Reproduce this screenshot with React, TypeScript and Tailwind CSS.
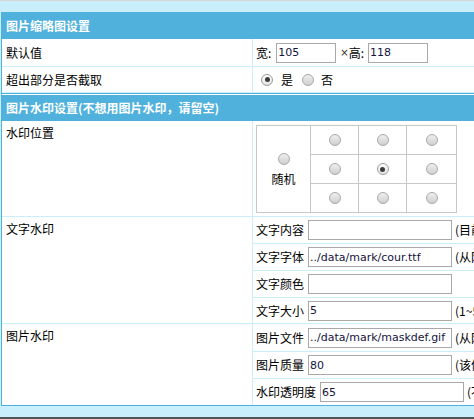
import React from "react"

const SEP = "border-[#c9eefc]"

function Radio({ checked }: { checked?: boolean }) {
  return (
    <span
      className={
        checked
          ? "inline-flex w-[12px] h-[12px] rounded-full border border-[#9c9c9c] bg-linear-to-b from-[#ffffff] to-[#e4e4e4] items-center justify-center shrink-0"
          : "inline-flex w-[12px] h-[12px] rounded-full border border-[#a8a8a8] bg-linear-to-b from-[#efefef] to-[#cfcfcf] shrink-0"
      }
    >
      {checked && <span className="w-[5px] h-[5px] rounded-full bg-[#3c3c3c]" />}
    </span>
  )
}

function TextBox({ value, width }: { value: string; width: string }) {
  return (
    <input
      readOnly
      value={value}
      className={`${width} h-[20px] border border-[#a9a9a9] bg-white px-[1px] text-[11px] text-[#141440] font-['DejaVu_Sans',sans-serif] outline-none shrink-0`}
    />
  )
}

function Field({
  label,
  value,
  suffix,
  h,
  last,
}: {
  label: string
  value: string
  suffix?: string
  h: string
  last?: boolean
}) {
  return (
    <div className={`${h} flex items-center pl-[3px] whitespace-nowrap ${last ? "" : `border-b ${SEP}`}`}>
      <span>{label}</span>
      <span className="ml-[4px]">
        <TextBox value={value} width="w-[144px]" />
      </span>
      {suffix && <span className="ml-[3px]">{suffix}</span>}
    </div>
  )
}

function Header({ children }: { children: React.ReactNode }) {
  return (
    <div className="h-[26px] bg-[#4fb1dc] text-white font-bold flex items-center pl-[4px] whitespace-nowrap">
      {children}
    </div>
  )
}

export default function App() {
  const positions = [
    [false, false, false],
    [false, true, false],
    [false, false, false],
  ]

  return (
    <div className="w-[474px] h-[419px] overflow-hidden bg-[#c9eefc] flex flex-col text-[12px] text-black font-['Noto_Sans_CJK_SC',sans-serif]">
      <div className="h-px bg-[#d6d6d6] shrink-0" />
      <div className="h-[11px] shrink-0" />

      <div className="ml-px w-[620px] border border-[#4fb1dc] bg-white shrink-0">
        <Header>图片缩略图设置</Header>

        <div className={`flex h-[28px] border-b ${SEP}`}>
          <div className={`w-[251px] border-r ${SEP} pl-[4px] flex items-center`}>默认值</div>
          <div className="flex-1 flex items-center pl-[3px] whitespace-nowrap">
            <span>宽:</span>
            <span className="ml-[5px]">
              <TextBox value="105" width="w-[60px]" />
            </span>
            <span className="ml-[4px] text-[10px] text-[#333] font-['DejaVu_Sans',sans-serif]">×</span>
            <span>高:</span>
            <span className="ml-[4px]">
              <TextBox value="118" width="w-[60px]" />
            </span>
          </div>
        </div>

        <div className={`flex h-[26px] border-b ${SEP}`}>
          <div className={`w-[251px] border-r ${SEP} pl-[4px] flex items-center`}>超出部分是否截取</div>
          <div className="flex-1 flex items-center pl-[8px]">
            <Radio checked />
            <span className="ml-[8px]">是</span>
            <span className="ml-[9px] flex">
              <Radio />
            </span>
            <span className="ml-[7px]">否</span>
          </div>
        </div>

        <div className="h-px bg-[#4fb1dc]" />
        <div className="h-px bg-white" />
        <Header>图片水印设置(不想用图片水印，请留空)</Header>

        <div className={`flex h-[96px] border-b ${SEP}`}>
          <div className={`w-[251px] border-r ${SEP} pl-[4px] pt-[3px] leading-[18px]`}>水印位置</div>
          <div className="flex-1 pl-[3px] pt-[4px]">
            <div className="grid grid-cols-[54px_48px_48px_50px] grid-rows-[29px_29px_29px] w-[201px] border-l border-t border-[#c8c8c8]">
              <div className="row-span-3 border-r border-b border-[#c8c8c8] flex flex-col items-center justify-center pt-[2px]">
                <Radio />
                <span className="mt-[5px]">随机</span>
              </div>
              {positions.flat().map((c, i) => (
                <div key={i} className="border-r border-b border-[#c8c8c8] flex items-center justify-center">
                  <Radio checked={c} />
                </div>
              ))}
            </div>
          </div>
        </div>

        <div className={`flex border-b ${SEP}`}>
          <div className={`w-[251px] border-r ${SEP} pl-[4px] pt-[3px] leading-[18px]`}>文字水印</div>
          <div className="flex-1">
            <Field h="h-[27px]" label="文字内容" value="" suffix="(目前只支持英文字母)" />
            <Field h="h-[27px]" label="文字字体" value="../data/mark/cour.ttf" suffix="(从网站根目录开始)" />
            <Field h="h-[27px]" label="文字颜色" value="" />
            <Field h="h-[25px]" label="文字大小" value="5" suffix="(1~5之间的整数)" last />
          </div>
        </div>

        <div className="flex">
          <div className={`w-[251px] border-r ${SEP} pl-[4px] pt-[3px] leading-[18px]`}>图片水印</div>
          <div className="flex-1">
            <Field h="h-[28px]" label="图片文件" value="../data/mark/maskdef.gif" suffix="(从网站根目录开始)" />
            <Field h="h-[27px]" label="图片质量" value="80" suffix="(该值越大图片质量越好)" />
            <Field h="h-[26px]" label="水印透明度" value="65" suffix="(不透明度)" last />
          </div>
        </div>
      </div>

      <div className="flex-1" />
      <div className="h-[2px] bg-[#555555] shrink-0" />
    </div>
  )
}
